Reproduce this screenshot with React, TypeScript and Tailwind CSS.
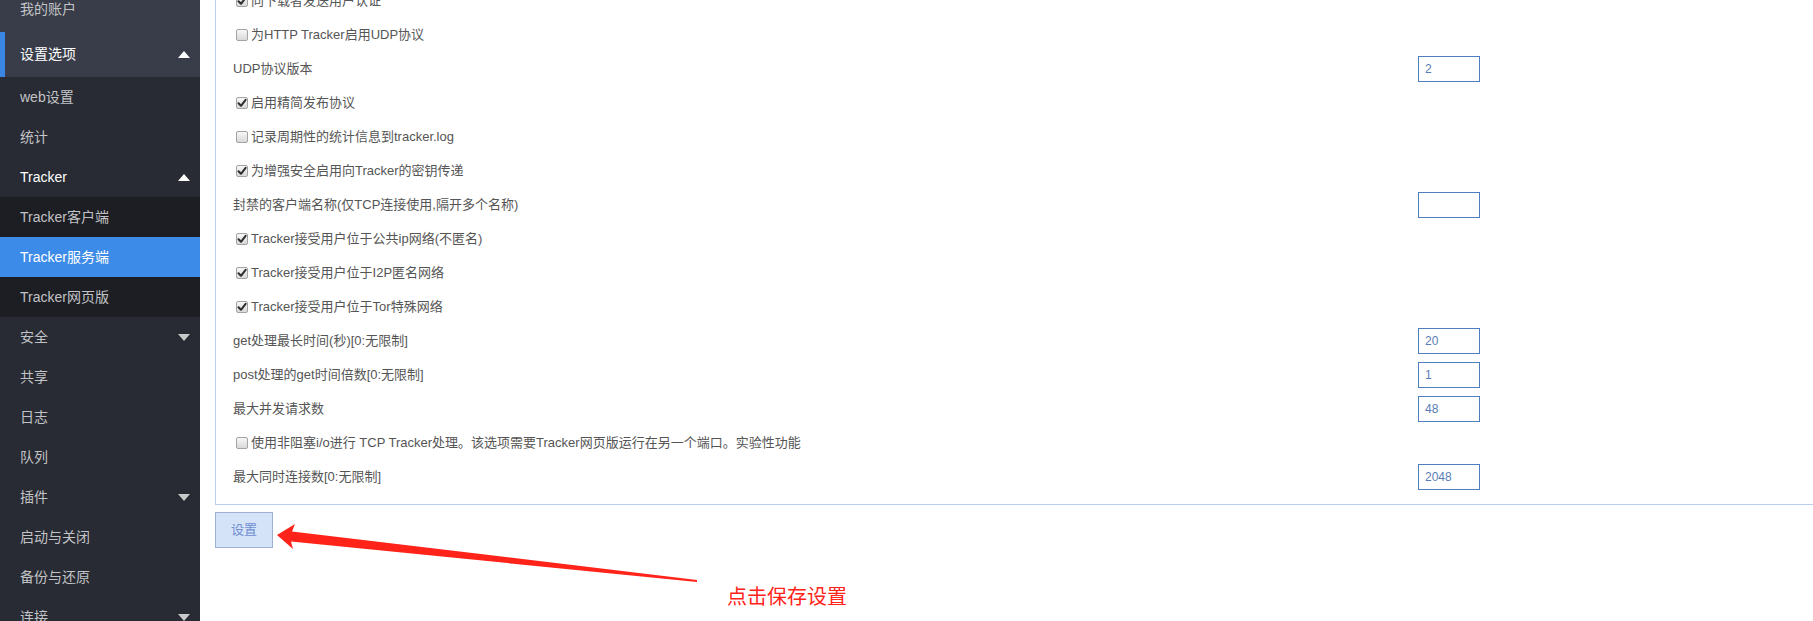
import React from "react";

const FONT = { fontFamily: '"Liberation Sans", "Noto Sans CJK SC", sans-serif' };

function Tri({ up, light }: { up?: boolean; light?: boolean }) {
  return (
    <svg width="12" height="7" viewBox="0 0 12 7" className="shrink-0">
      {up ? (
        <polygon points="0,7 12,7 6,0" fill={light ? "#ffffff" : "#c7c8ca"} />
      ) : (
        <polygon points="0,0 12,0 6,7" fill={light ? "#ffffff" : "#c7c8ca"} />
      )}
    </svg>
  );
}

type NavProps = {
  label: string;
  h: string;
  white?: boolean;
  arrow?: "up" | "down";
  bar?: boolean;
  active?: boolean;
};

function NavRow({ label, h, white, arrow, bar, active }: NavProps) {
  return (
    <div
      className={`relative flex items-center pl-[20px] pr-[10px] text-[14px] ${h} ${
        active ? "bg-[#3d8be8]" : ""
      } ${white || active ? "text-white" : "text-[#c2c3c6]"}`}
    >
      {bar && <div className="absolute left-0 top-0 bottom-0 w-[5px] bg-[#3a87e3]" />}
      <span className="flex-1">{label}</span>
      {arrow && <Tri up={arrow === "up"} light={arrow === "up"} />}
    </div>
  );
}

function Checkbox({ checked }: { checked?: boolean }) {
  return (
    <span className="ml-[3px] mr-[3px] inline-flex h-[12px] w-[12px] shrink-0 items-center justify-center rounded-[2px] border border-[#a3a3a3] bg-gradient-to-b from-[#f7f7f7] to-[#d9d9d9]">
      {checked && (
        <svg width="10" height="10" viewBox="0 0 10 10">
          <path d="M1.5 5.2 L4 7.8 L8.6 1.8" fill="none" stroke="#2e2e2e" strokeWidth="2" strokeLinecap="round" strokeLinejoin="round" />
        </svg>
      )}
    </span>
  );
}

type Row =
  | { kind: "check"; label: string; checked: boolean }
  | { kind: "input"; label: string; value: string };

const rows: Row[] = [
  { kind: "check", label: "向下载者发送用户认证", checked: true },
  { kind: "check", label: "为HTTP Tracker启用UDP协议", checked: false },
  { kind: "input", label: "UDP协议版本", value: "2" },
  { kind: "check", label: "启用精简发布协议", checked: true },
  { kind: "check", label: "记录周期性的统计信息到tracker.log", checked: false },
  { kind: "check", label: "为增强安全启用向Tracker的密钥传递", checked: true },
  { kind: "input", label: "封禁的客户端名称(仅TCP连接使用,隔开多个名称)", value: "" },
  { kind: "check", label: "Tracker接受用户位于公共ip网络(不匿名)", checked: true },
  { kind: "check", label: "Tracker接受用户位于I2P匿名网络", checked: true },
  { kind: "check", label: "Tracker接受用户位于Tor特殊网络", checked: true },
  { kind: "input", label: "get处理最长时间(秒)[0:无限制]", value: "20" },
  { kind: "input", label: "post处理的get时间倍数[0:无限制]", value: "1" },
  { kind: "input", label: "最大并发请求数", value: "48" },
  {
    kind: "check",
    label: "使用非阻塞i/o进行 TCP Tracker处理。该选项需要Tracker网页版运行在另一个端口。实验性功能",
    checked: false,
  },
  { kind: "input", label: "最大同时连接数[0:无限制]", value: "2048" },
];

export default function App() {
  return (
    <div className="relative flex h-[621px] w-full overflow-hidden bg-white" style={FONT}>
      {/* Sidebar */}
      <aside className="w-[200px] shrink-0 overflow-hidden bg-[#393d49]">
        <div className="-mt-[13px]">
          <NavRow label="我的账户" h="h-[45px]" />
          <NavRow label="设置选项" h="h-[45px]" white arrow="up" bar />
          <div className="bg-[#282b33]">
            <NavRow label="web设置" h="h-[40px]" />
            <NavRow label="统计" h="h-[40px]" />
            <NavRow label="Tracker" h="h-[40px]" white arrow="up" />
            <div className="bg-[#1d1e23]">
              <NavRow label="Tracker客户端" h="h-[40px]" />
              <NavRow label="Tracker服务端" h="h-[40px]" active />
              <NavRow label="Tracker网页版" h="h-[40px]" />
            </div>
            <NavRow label="安全" h="h-[40px]" arrow="down" />
            <NavRow label="共享" h="h-[40px]" />
            <NavRow label="日志" h="h-[40px]" />
            <NavRow label="队列" h="h-[40px]" />
            <NavRow label="插件" h="h-[40px]" arrow="down" />
            <NavRow label="启动与关闭" h="h-[40px]" />
            <NavRow label="备份与还原" h="h-[40px]" />
            <NavRow label="连接" h="h-[40px]" arrow="down" />
          </div>
        </div>
      </aside>

      {/* Main */}
      <main className="flex-1 pl-[15px]">
        <div className="-mt-[16px] border-b border-l border-[#b9cdf0] pb-[10px] pl-[17px] text-[13px] text-[#555555]">
          {rows.map((r, i) => (
            <div key={i} className="flex h-[34px] items-center">
              {r.kind === "check" ? (
                <div className="flex items-center">
                  <Checkbox checked={r.checked} />
                  <span>{r.label}</span>
                </div>
              ) : (
                <>
                  <div className="w-[1185px] shrink-0">{r.label}</div>
                  <div className="flex h-[26px] w-[62px] items-center border border-[#4f7ec0] pl-[6px] text-[12px] text-[#5a7db7]">
                    {r.value}
                  </div>
                </>
              )}
            </div>
          ))}
        </div>
        <button className="mt-[7px] flex h-[36px] w-[58px] items-center justify-center border border-[#9eb0d4] bg-[#d5e3f8] text-[13px] text-[#6f8ed0]">
          设置
        </button>
      </main>

      {/* Annotation overlay */}
      <svg className="pointer-events-none absolute left-0 top-0" width="1813" height="621" viewBox="0 0 1813 621">
        <polygon
          points="277,535 295,524 292,531.5 697,580 697,582 291,541.5 293,549"
          fill="#ff2319"
        />
      </svg>
      <div className="pointer-events-none absolute left-[727px] top-[581px] text-[20px] leading-[30px] text-[#ff2319]" style={{ fontFamily: '"Noto Sans CJK SC", sans-serif' }}>
        点击保存设置
      </div>
    </div>
  );
}
